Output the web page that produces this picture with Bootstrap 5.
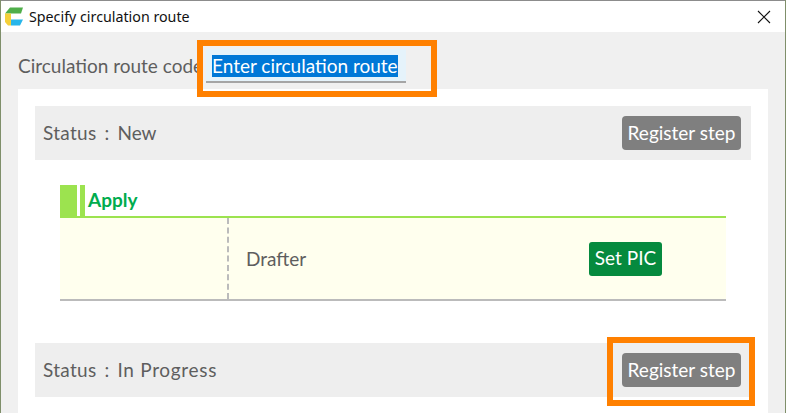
<!DOCTYPE html>
<html lang="en">
<head>
    <meta charset="UTF-8">
    <meta name="viewport" content="width=device-width, initial-scale=1.0">
    <title>Specify circulation route</title>
    <link href="https://cdn.jsdelivr.net/npm/bootstrap@5.3.3/dist/css/bootstrap.min.css" rel="stylesheet">
    <style>
        html, body { height: 413px; overflow: hidden; }
        body { background: #7f8f6a; font-family: Lato, sans-serif; color: #5e5e5e; }
        .dlg { position: relative; height: 413px; margin: 0 1px; background: #f0f0f0; border-top: 1px solid #8c8c8c; overflow: hidden; }
        .dlg-title { height: 31px; padding-left: 4px; background: #fff; color: #111; font-family: "Noto Sans", sans-serif; font-size: 14.250px; }
        .dlg-title span { margin-left: 4px; }
        .dlg-close { margin-right: 14px; }
        .code-row { height: 57px; padding: 17px 0 0 17px; font-size: 19px; }
        .code-label { flex: none; width: 180px; line-height: 34px; white-space: nowrap; }
        .code-input { width: 200px; height: 34px; margin-left: 8px; padding: 6px; background: #e5f3fb; border-bottom: 2px solid #a5a5a5; line-height: 22px; white-space: nowrap; }
        .code-input span { display: inline-block; height: 22px; background: #0078d7; color: #fff; }
        .panel { width: 750px; margin-left: 17px; padding: 17px; background: #fff; height: 400px; }
        .status-bar { height: 54px; padding: 0 10px 0 8px; background: #eee; font-size: 19px; }
        .status-label { letter-spacing: .3px; }
        .status-sep { display: inline-block; width: 21px; text-align: center; }
        .status-wide { letter-spacing: .7px; }
        .btn-reg { width: 119px; height: 34px; padding: 1px 0 0; background: #7f7f7f; border: 0; border-radius: 4px; color: #fff; font-size: 19px; }
        .step { margin: 25px 25px 42px; }
        .step-head { height: 33px; }
        .step-mark { width: 17px; height: 31px; background: #9ce34f; }
        .step-name { margin-left: 3px; padding-left: 3px; flex: 1; height: 31px; border-left: 5px solid #9ce34f; color: #00ac4e; font-size: 19px; font-weight: 700; line-height: 30px; }
        .step-line { height: 2px; margin-top: -2px; background: #9ce34f; }
        .step-body { height: 83px; background: #ffffee; border-bottom: 2px solid #bbb; font-size: 19px; }
        .step-left { width: 169px; height: 100%; border-right: 2px dashed #bbb; }
        .step-role { width: 360px; padding: 1px 0 0 17px; }
        .btn-pic { width: 73px; height: 34px; padding: 0; background: #058a3e; border: 0; border-radius: 3px; color: #fff; font-size: 19px; }
        .hl { position: absolute; border: 6px solid #ff8000; pointer-events: none; }
        .hl-code { left: 196px; top: 39px; width: 240px; height: 57px; }
        .hl-reg { left: 606px; top: 336px; width: 148px; height: 69px; }
    </style>
</head>
<body>
    <div class="dlg">
        <div class="dlg-title d-flex align-items-center">
            <svg width="20" height="20" viewBox="0 0 20 20">
                <path d="M0 6.500 L5 .5 H18 L16 6.500 Z" fill="#4fae4a"/>
                <path d="M0 6.500 H6 V18.500 H3 L0 15 Z" fill="#f4d03a"/>
                <path d="M6 12.500 H18 L15 18.500 H6 Z" fill="#29b6ea"/>
            </svg>
            <span>Specify circulation route</span>
            <svg class="dlg-close ms-auto" width="14" height="14" viewBox="0 0 14 14">
                <path d="M1 1 L13 13 M13 1 L1 13" stroke="#111" stroke-width="1.100" fill="none"/>
            </svg>
        </div>
        <div class="code-row d-flex">
            <div class="code-label">Circulation route code</div>
            <div class="code-input"><span>Enter circulation route</span></div>
        </div>
        <div class="panel">
            <div class="status-bar d-flex align-items-center justify-content-between">
                <div><span class="status-label">Status</span><span class="status-sep">:</span>New</div>
                <button type="button" class="btn btn-reg">Register step</button>
            </div>
            <div class="step">
                <div class="step-head d-flex">
                    <div class="step-mark"></div>
                    <div class="step-name">Apply</div>
                </div>
                <div class="step-line"></div>
                <div class="step-body d-flex align-items-center">
                    <div class="step-left"></div>
                    <div class="step-role">Drafter</div>
                    <button type="button" class="btn btn-pic">Set PIC</button>
                </div>
            </div>
            <div class="status-bar d-flex align-items-center justify-content-between">
                <div><span class="status-label">Status</span><span class="status-sep">:</span><span class="status-wide">In Progress</span></div>
                <button type="button" class="btn btn-reg">Register step</button>
            </div>
        </div>
        <div class="hl hl-code"></div>
        <div class="hl hl-reg"></div>
    </div>
    <script src="https://cdn.jsdelivr.net/npm/bootstrap@5.3.3/dist/js/bootstrap.bundle.min.js"></script>
</body>
</html>
